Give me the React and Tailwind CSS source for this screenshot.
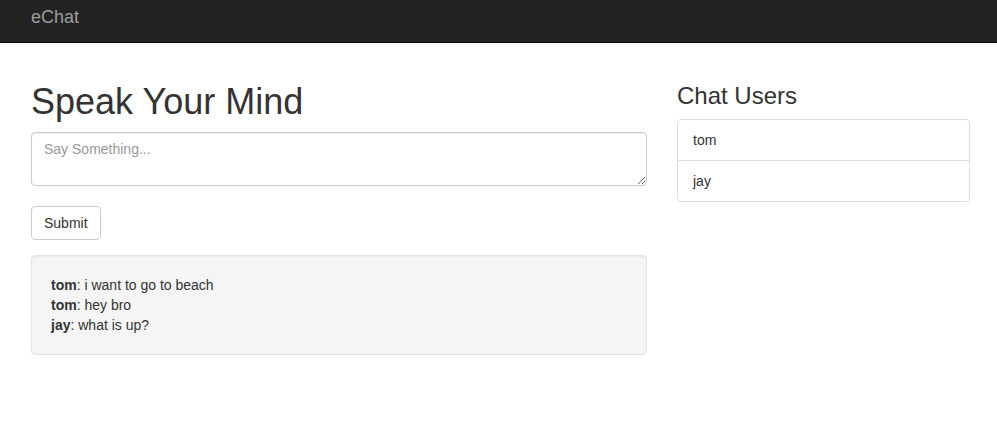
export default function App() {
  return (
    <div className="min-h-[428px] bg-white text-[14px] leading-[20px] text-[#333]" style={{ fontFamily: '"Liberation Sans", Arial, sans-serif' }}>
      <nav className="h-[43px] bg-[#222] border-b border-[#080808] flex items-center pl-[31px]">
        <span className="text-[18px] leading-[20px] text-[#9d9d9d] -mt-[8px]">eChat</span>
      </nav>
      <div className="flex gap-[30px] pl-[31px] pr-[27px] mt-[19px]">
        <div className="w-[616px] shrink-0">
          <h1 className="text-[36px] leading-[39.6px] font-normal mt-[20px] mb-[10px]">Speak Your Mind</h1>
          <textarea
            rows={2}
            placeholder="Say Something..."
            className="block w-full h-[54px] px-[12px] py-[6px] border border-[#ccc] rounded-[4px] text-[14px] leading-[20px] text-[#555] placeholder:text-[#999] shadow-[inset_0_1px_1px_rgba(0,0,0,0.075)] outline-none"
          />
          <button className="mt-[20px] h-[34px] px-[12px] border border-[#ccc] rounded-[4px] bg-white text-[14px] leading-[20px] text-[#333]">Submit</button>
          <div className="mt-[15px] bg-[#f5f5f5] border border-[#e3e3e3] rounded-[4px] p-[19px] shadow-[inset_0_1px_1px_rgba(0,0,0,0.05)]">
            <div><b>tom</b>: i want to go to beach</div>
            <div><b>tom</b>: hey bro</div>
            <div><b>jay</b>: what is up?</div>
          </div>
        </div>
        <div className="w-[293px] shrink-0">
          <h3 className="text-[24px] leading-[26.4px] font-normal mt-[21px] mb-[10px]">Chat Users</h3>
          <div className="border border-[#ddd] rounded-[4px]">
            <div className="px-[15px] py-[10px] border-b border-[#ddd]">tom</div>
            <div className="px-[15px] py-[10px]">jay</div>
          </div>
        </div>
      </div>
    </div>
  );
}
